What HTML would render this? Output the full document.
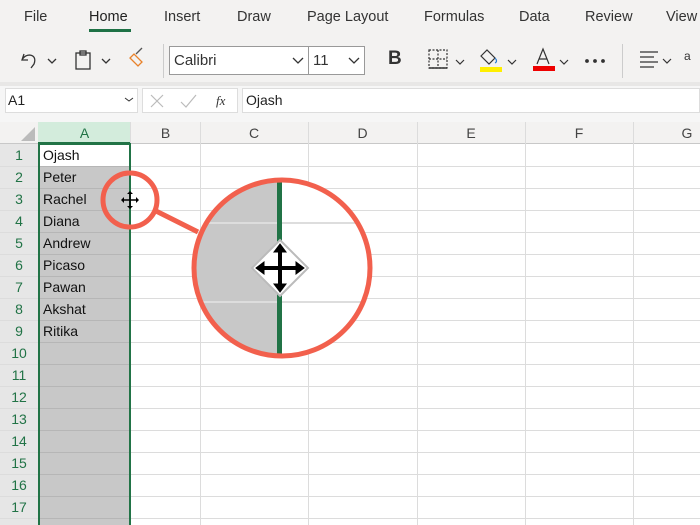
<!DOCTYPE html>
<html><head><style>
*{margin:0;padding:0;box-sizing:border-box}
body{width:700px;height:525px;overflow:hidden;background:#fff;font-family:"Liberation Sans",sans-serif;position:relative}
.a{position:absolute}
.tab{position:absolute;top:9px;font-size:14.5px;color:#333}
.rn{position:absolute;left:0;width:38px;text-align:center;font-size:14px;color:#217346}
.cell{position:absolute;left:43px;font-size:14px;color:#111}
.ch{position:absolute;top:122px;height:22px;font-size:14px;color:#444;text-align:center;line-height:22px}
</style></head><body>
<div class="a" style="left:0;top:0;width:700px;height:84px;background:#f3f2f1"></div>
<div class="a" style="left:0;top:82px;width:700px;height:4px;background:#e8e7e6"></div>
<div class="a" style="left:0;top:86px;width:700px;height:36px;background:#f6f6f6"></div>
<span class="tab" style="left:24px">File</span>
<span class="tab" style="left:89px;color:#222">Home</span>
<div class="a" style="left:89px;top:29px;width:42px;height:3px;background:#1e7145"></div>
<span class="tab" style="left:164px">Insert</span>
<span class="tab" style="left:237px">Draw</span>
<span class="tab" style="left:307px">Page Layout</span>
<span class="tab" style="left:424px">Formulas</span>
<span class="tab" style="left:519px">Data</span>
<span class="tab" style="left:585px">Review</span>
<span class="tab" style="left:666px">View</span>
<!-- toolbar icons -->
<svg class="a" style="left:18px;top:46px" width="160" height="28" fill="none" stroke="#333" stroke-width="1.3">
<path d="M6 8 L4 14 L10 14 M4 14 C8 6 20 8 16 18 L13 22"/>
<path d="M30 13 l4 4 4-4"/>
<rect x="58" y="7" width="14" height="16"/><rect x="62" y="5" width="6" height="4"/>
<path d="M84 13 l4 4 4-4"/>
<path d="M112 12 l8 8 4-4 -8-8z" stroke="#e8822a"/><path d="M118 8 l6-6" stroke="#555"/>
</svg>
<div class="a" style="left:163px;top:44px;width:1px;height:34px;background:#ccc"></div>
<div class="a" style="left:169px;top:46px;width:140px;height:29px;background:#fff;border:1px solid #999"></div>
<span class="a" style="left:174px;top:52px;font-size:15px;color:#333">Calibri</span>
<svg class="a" style="left:291px;top:56px" width="14" height="10" fill="none" stroke="#333" stroke-width="1.3"><path d="M2 2 l5 5 5-5"/></svg>
<div class="a" style="left:308px;top:46px;width:57px;height:29px;background:#fff;border:1px solid #999"></div>
<span class="a" style="left:313px;top:52px;font-size:15px;color:#333">11</span>
<svg class="a" style="left:347px;top:56px" width="14" height="10" fill="none" stroke="#333" stroke-width="1.3"><path d="M2 2 l5 5 5-5"/></svg>
<span class="a" style="left:388px;top:48px;font-size:19px;font-weight:bold;color:#333">B</span>
<svg class="a" style="left:425px;top:46px" width="200" height="30" fill="none" stroke="#333" stroke-width="1.2">
<rect x="4" y="4" width="18" height="18" stroke-dasharray="2 1.5"/><path d="M13 4v18M4 13h18" stroke-dasharray="2 1.5"/><path d="M4 22h18" stroke-width="1.5"/>
<path d="M31 14l4 4 4-4"/>
<path d="M56 10 l6-6 8 8 -6 6z"/><path d="M70 12 c2 2 2 4 0 5" stroke="#2b7cd3"/>
<rect x="55" y="21" width="22" height="5" fill="#ffef00" stroke="none"/>
<path d="M83 14l4 4 4-4"/>
<path d="M112 18 l6-15 6 15 M114 13 h8"/>
<rect x="108" y="20" width="22" height="5" fill="#e00" stroke="none"/>
<path d="M135 14l4 4 4-4"/>
<circle cx="162" cy="15" r="1.3" fill="#333"/><circle cx="170" cy="15" r="1.3" fill="#333"/><circle cx="178" cy="15" r="1.3" fill="#333"/>
</svg>
<div class="a" style="left:622px;top:44px;width:1px;height:34px;background:#ccc"></div>
<svg class="a" style="left:636px;top:48px" width="64" height="26" fill="none" stroke="#333" stroke-width="1.2">
<path d="M4 4h18M4 9h14M4 14h18M4 19h14"/><path d="M27 11l4 4 4-4"/><text x="48" y="12" font-size="12" fill="#333" stroke="none" font-family="Liberation Sans">a</text>
</svg>
<!-- formula bar -->
<div class="a" style="left:5px;top:88px;width:133px;height:25px;background:#fff;border:1px solid #ddd"></div>
<span class="a" style="left:8px;top:92px;font-size:14px;color:#222">A1</span>
<svg class="a" style="left:124px;top:96px" width="10" height="8" fill="none" stroke="#333"><path d="M1 2l4 3 4-3"/></svg>
<div class="a" style="left:142px;top:88px;width:96px;height:25px;background:#fff;border:1px solid #ddd"></div>
<svg class="a" style="left:148px;top:92px" width="90" height="18" fill="none" stroke="#bbb" stroke-width="1.2"><path d="M3 3l12 12M15 3L3 15"/><path d="M33 10l5 5 10-12"/><text x="68" y="13" font-size="13" font-style="italic" fill="#333" stroke="none" font-family="Liberation Serif">fx</text></svg>
<div class="a" style="left:242px;top:88px;width:458px;height:25px;background:#fff;border:1px solid #ddd"></div>
<span class="a" style="left:246px;top:92px;font-size:14px;color:#222">Ojash</span>
<!-- grid -->
<div class="a" style="left:0;top:122px;width:700px;height:22px;background:#f3f2f1;border-bottom:1px solid #c8c8c8"></div>
<div class="a" style="left:0;top:144px;width:38px;height:381px;background:#e6e6e6"></div>
<svg class="a" style="left:20px;top:126px" width="16" height="16"><path d="M15 1V15H1z" fill="#bbb"/></svg>
<div class="a" style="left:38px;top:122px;width:93px;height:22px;background:#d3ecdc;border-bottom:2px solid #217346"></div>
<div class="ch" style="left:38px;width:93px;color:#217346">A</div>
<div class="ch" style="left:131px;width:69px">B</div>
<div class="ch" style="left:200px;width:108px">C</div>
<div class="ch" style="left:308px;width:109px">D</div>
<div class="ch" style="left:417px;width:108px">E</div>
<div class="ch" style="left:525px;width:108px">F</div>
<div class="ch" style="left:633px;width:108px">G</div>
<svg class="a" style="left:0;top:122px" width="700" height="403">
<g stroke="#dcdcdc" stroke-width="1">
<path d="M130.5 0V403M200.5 0V403M308.5 0V403M417.5 0V403M525.5 0V403M633.5 0V403"/>
<path d="M0 44.5H700M0 66.5H700M0 88.5H700M0 110.5H700M0 132.5H700M0 154.5H700M0 176.5H700M0 198.5H700M0 220.5H700M0 242.5H700M0 264.5H700M0 286.5H700M0 308.5H700M0 330.5H700M0 352.5H700M0 374.5H700M0 396.5H700"/>
</g>
<rect x="39" y="44" width="91" height="359" fill="#c8c8c8"/>
<rect x="39" y="22" width="91" height="22" fill="#fff"/>
<g stroke="#b6b6b6"><path d="M39 44.5H130M39 66.5H130M39 88.5H130M39 110.5H130M39 132.5H130M39 154.5H130M39 176.5H130M39 198.5H130M39 220.5H130M39 242.5H130M39 264.5H130M39 286.5H130M39 308.5H130M39 330.5H130M39 352.5H130M39 374.5H130M39 396.5H130"/></g>
<rect x="39" y="22" width="91" height="390" fill="none" stroke="#217346" stroke-width="2"/>
</svg>
<div class="rn" style="top:147px">1</div><div class="rn" style="top:169px">2</div><div class="rn" style="top:191px">3</div><div class="rn" style="top:213px">4</div><div class="rn" style="top:235px">5</div><div class="rn" style="top:257px">6</div><div class="rn" style="top:279px">7</div><div class="rn" style="top:301px">8</div><div class="rn" style="top:323px">9</div><div class="rn" style="top:345px">10</div><div class="rn" style="top:367px">11</div><div class="rn" style="top:389px">12</div><div class="rn" style="top:411px">13</div><div class="rn" style="top:433px">14</div><div class="rn" style="top:455px">15</div><div class="rn" style="top:477px">16</div><div class="rn" style="top:499px">17</div>
<div class="cell" style="top:147px">Ojash</div><div class="cell" style="top:169px">Peter</div><div class="cell" style="top:191px">Rachel</div><div class="cell" style="top:213px">Diana</div><div class="cell" style="top:235px">Andrew</div><div class="cell" style="top:257px">Picaso</div><div class="cell" style="top:279px">Pawan</div><div class="cell" style="top:301px">Akshat</div><div class="cell" style="top:323px">Ritika</div>
<!-- magnifier -->
<svg class="a" style="left:0;top:0" width="700" height="525">
<defs><clipPath id="c"><circle cx="282" cy="268" r="88"/></clipPath></defs>
<g clip-path="url(#c)">
<rect x="190" y="178" width="90" height="180" fill="#c8c8c8"/>
<rect x="280" y="178" width="100" height="180" fill="#fff"/>
<path d="M190 223H380M190 302H380" stroke="#ddd" stroke-width="2"/>
<rect x="277" y="178" width="5" height="180" fill="#217346"/>
<path d="M280 240 L308 268 280 296 252 268z" fill="#fff" stroke="#bbb" stroke-width="2"/>
<g stroke="#000" stroke-width="4" fill="#000"><path d="M280 250V286M262 268H298"/>
<path d="M280 244l-6 8h12zM280 292l-6-8h12zM256 268l8-6v12zM304 268l-8-6v12z" stroke-width="1"/></g>
</g>
<g fill="none" stroke="#f2604d" stroke-width="5">
<circle cx="282" cy="268" r="88"/><circle cx="130" cy="200" r="27"/>
<path d="M156 211L198 232"/></g>
<g fill="#000"><path d="M130 193V207M123 200H137" stroke="#000" stroke-width="1.6"/><path d="M130 191l-3 3h6zM130 209l-3-3h6zM121 200l3-3v6zM139 200l-3-3v6z"/></g>
</svg>
</body></html>
